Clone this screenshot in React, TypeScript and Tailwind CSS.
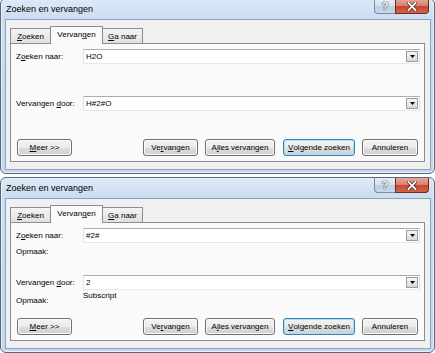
import React from "react";

function U({ children }: { children: React.ReactNode }) {
  return <span className="underline decoration-1 underline-offset-[1px]">{children}</span>;
}

function Combo({ value }: { value: string }) {
  return (
    <div className="flex h-[15px] flex-1 items-center border border-[#abadb3] border-b-[#e3e9ef] border-l-[#e2e3ea] border-r-[#dbdfe6] bg-white pl-[2px] pr-[1px]">
      <span className="flex-1 leading-none">{value}</span>
      <div className="flex h-[11px] w-[12px] items-center justify-center border border-[#9a9ca3] bg-gradient-to-b from-[#f6f6f6] to-[#d9d9d9]">
        <svg width="5" height="3" viewBox="0 0 5 3">
          <path d="M0 0H5L2.5 3Z" fill="#000" />
        </svg>
      </div>
    </div>
  );
}

function Btn({ cls, def, children }: { cls: string; def?: boolean; children: React.ReactNode }) {
  return (
    <div
      className={
        "flex h-[17px] items-center justify-center rounded-[3px] border bg-[linear-gradient(#f3f3f3_0%,#ebebeb_50%,#dddddd_50%,#d0d0d0_100%)] leading-none text-black " +
        (def
          ? "border-[#3c7fb1] shadow-[inset_0_0_0_1px_#a7e2f8] "
          : "border-[#707070] shadow-[inset_0_0_0_1px_#fbfbfb] ") +
        cls
      }
    >
      {children}
    </div>
  );
}

function CaptionButtons() {
  return (
    <div className="flex">
      <div className="flex h-[15px] w-[21px] items-center justify-center rounded-bl-[4px] border border-t-0 border-r-0 border-[#7b8ca3] bg-[linear-gradient(#e6eef7_0%,#d3e0ee_50%,#bccfe5_50%,#c5d8ee_100%)]">
        <span
          className="text-[11px] font-bold leading-none text-white"
          style={{ textShadow: "0 0 1px #3b4b60, 0 0 1px #3b4b60, 0 0 1px #3b4b60" }}
        >
          ?
        </span>
      </div>
      <div className="flex h-[15px] w-[34px] items-center justify-center rounded-br-[4px] border border-t-0 border-[#6d2c22] bg-[linear-gradient(#e9a99b_0%,#d97d69_50%,#c7452f_50%,#d2624a_100%)]">
        <svg width="10" height="9" viewBox="0 0 10 9">
          <path d="M1.5 1L8.5 8M8.5 1L1.5 8" stroke="#4a1a12" strokeWidth="3.2" strokeLinecap="square" />
          <path d="M1.5 1L8.5 8M8.5 1L1.5 8" stroke="#ffffff" strokeWidth="1.8" strokeLinecap="square" />
        </svg>
      </div>
    </div>
  );
}

function Dialog({ zoek, verv, extended, extraCls }: { zoek: string; verv: string; extended?: boolean; extraCls?: string }) {
  return (
    <div
      className={
        "flex h-[176px] w-[435px] flex-col rounded-[6px] border border-[#56687d] bg-[linear-gradient(180deg,#dde9f6_0%,#cadcf1_12%,#c3d7ef_100%)] shadow-[inset_0_0_0_1px_#e8f1fb] " +
        (extraCls ?? "")
      }
    >
      <div className="flex h-[20px] items-start justify-between pl-[5px] pr-[5px]">
        <span className="mt-[5px] text-[9px] leading-[11px] text-black">Zoeken en vervangen</span>
        <CaptionButtons />
      </div>
      <div className="ml-[4px] mr-[3px] h-[151px] border border-[#8da2bc] bg-[#f0f0f0] pl-[4px] pt-[6px]">
        <div className="relative z-10 -mb-px flex items-end">
          <div className="flex h-[16px] w-[41px] items-center justify-center border border-[#898c95] bg-gradient-to-b from-[#f4f4f4] to-[#e0e0e0] pt-[1px] leading-none">
            <U>Z</U>oeken
          </div>
          <div className="-ml-px flex h-[18px] w-[53px] items-center justify-center border border-b-0 border-[#898c95] bg-[#fafafa] pb-[1px] leading-none">
            Vervan<U>g</U>en
          </div>
          <div className="-ml-px flex h-[16px] w-[41px] items-center justify-center border border-[#898c95] bg-gradient-to-b from-[#f4f4f4] to-[#e0e0e0] pt-[1px] leading-none">
            <U>G</U>a naar
          </div>
        </div>
        <div className="flex h-[119px] w-[415px] flex-col border border-[#898c95] bg-[#fafafa] pl-[5px] pr-[4px] pt-[5px]">
          <div className="flex h-[15px] items-center">
            <div className="w-[67px] leading-none">
              Z<U>o</U>eken naar:
            </div>
            <Combo value={zoek} />
          </div>
          <div className="h-[32px]">
            {extended && <div className="mt-[5px] leading-none">Opmaak:</div>}
          </div>
          <div className="flex h-[15px] items-center">
            <div className="w-[67px] leading-none">
              Vervangen <U>d</U>oor:
            </div>
            <Combo value={verv} />
          </div>
          <div className="flex h-[28px]">
            {extended && (
              <>
                <div className="mt-[7px] w-[67px] leading-none">Opmaak:</div>
                <div className="mt-[2px] leading-none">Subscript</div>
              </>
            )}
          </div>
          <div className="flex h-[17px] items-center">
            <Btn cls="ml-[1px] w-[55px]">
              <U>M</U>eer &gt;&gt;
            </Btn>
            <div className="flex-1" />
            <Btn cls="w-[55px]">
              Ve<U>r</U>vangen
            </Btn>
            <Btn cls="ml-[7px] w-[70px]">
              A<U>l</U>les vervangen
            </Btn>
            <Btn cls="ml-[8px] w-[72px]" def>
              <U>V</U>olgende zoeken
            </Btn>
            <Btn cls="ml-[7px] mr-[2px] w-[56px]">Annuleren</Btn>
          </div>
        </div>
      </div>
    </div>
  );
}

export default function App() {
  return (
    <div className="h-[353px] w-[435px] overflow-hidden bg-white font-['Liberation_Sans',Arial,sans-serif] text-[8px] text-black">
      <div className="flex flex-col gap-[3px]">
        <Dialog zoek="H2O" verv="H#2#O" extraCls="-mt-[2px]" />
        <Dialog zoek="#2#" verv="2" extended />
      </div>
    </div>
  );
}
